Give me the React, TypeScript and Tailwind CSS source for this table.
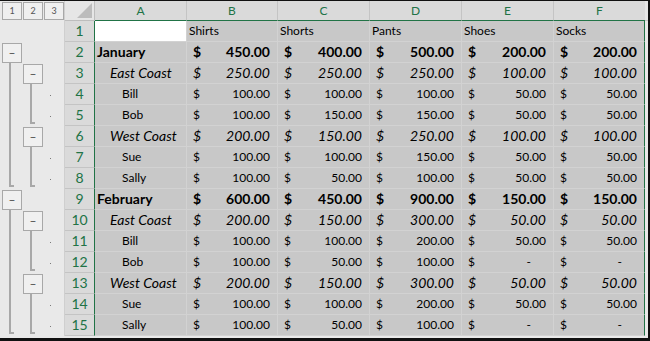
type Kind = "head" | "month" | "region" | "person";
type Mark = "" | "btn" | "line" | "end";

const cols = ["A", "B", "C", "D", "E", "F"];
const widths = ["w-[92px]", "w-[91px]", "w-[92px]", "w-[92px]", "w-[92px]", "w-[91px]"];

const rows: { label: string; kind: Kind; vals: (number | null)[]; l1: Mark; l2: Mark; dot: boolean }[] = [
  { label: "", kind: "head", vals: [], l1: "", l2: "", dot: false },
  { label: "January", kind: "month", vals: [450, 400, 500, 200, 200], l1: "btn", l2: "", dot: false },
  { label: "East Coast", kind: "region", vals: [250, 250, 250, 100, 100], l1: "line", l2: "btn", dot: false },
  { label: "Bill", kind: "person", vals: [100, 100, 100, 50, 50], l1: "line", l2: "line", dot: true },
  { label: "Bob", kind: "person", vals: [100, 150, 150, 50, 50], l1: "line", l2: "end", dot: true },
  { label: "West Coast", kind: "region", vals: [200, 150, 250, 100, 100], l1: "line", l2: "btn", dot: false },
  { label: "Sue", kind: "person", vals: [100, 100, 150, 50, 50], l1: "line", l2: "line", dot: true },
  { label: "Sally", kind: "person", vals: [100, 50, 100, 50, 50], l1: "end", l2: "end", dot: true },
  { label: "February", kind: "month", vals: [600, 450, 900, 150, 150], l1: "btn", l2: "", dot: false },
  { label: "East Coast", kind: "region", vals: [200, 150, 300, 50, 50], l1: "line", l2: "btn", dot: false },
  { label: "Bill", kind: "person", vals: [100, 100, 200, 50, 50], l1: "line", l2: "line", dot: true },
  { label: "Bob", kind: "person", vals: [100, 50, 100, null, null], l1: "line", l2: "end", dot: true },
  { label: "West Coast", kind: "region", vals: [200, 150, 300, 50, 50], l1: "line", l2: "btn", dot: false },
  { label: "Sue", kind: "person", vals: [100, 100, 200, 50, 50], l1: "line", l2: "line", dot: true },
  { label: "Sally", kind: "person", vals: [100, 50, 100, null, null], l1: "end", l2: "end", dot: true },
];

const headers = ["Shirts", "Shorts", "Pants", "Shoes", "Socks"];

function Lane({ mark, first }: { mark: Mark; first: boolean }) {
  return (
    <div className={`${first ? "w-[22px]" : "w-[21px]"} h-full flex`}>
      {mark === "btn" && (
        <div
          className={`${first ? "ml-[2px]" : "ml-[1px]"} mt-[1px] w-[20px] h-[20px] border border-[#a8a8a8] bg-[#f0f0f0] flex items-center justify-center text-[12px] leading-none text-[#444]`}
        >
          –
        </div>
      )}
      {mark === "line" && <div className={`${first ? "ml-[9px]" : "ml-[8px]"} w-[2px] h-full bg-[#a8a8a8]`} />}
      {mark === "end" && (
        <div className={`${first ? "ml-[9px]" : "ml-[8px]"} w-[5px] h-[19px] border-l-2 border-b-2 border-[#a8a8a8]`} />
      )}
    </div>
  );
}

function Money({ v, kind }: { v: number | null; kind: Kind }) {
  const style =
    kind === "month" ? "text-[14px] font-bold" : kind === "region" ? "text-[14px] italic" : "text-[12px]";
  return (
    <div className={`flex justify-between pl-[6px] ${v === null ? "pr-[22px]" : "pr-[7px]"} ${style}`}>
      <span>$</span>
      <span>{v === null ? "-" : v.toFixed(2)}</span>
    </div>
  );
}

export default function App() {
  return (
    <div className="w-[650px] h-[341px] overflow-hidden bg-[#e9e9e9] border-t border-r-2 border-b-[3px] border-[#111] flex flex-col [font-family:Lato,'Open_Sans',sans-serif] text-black">
      {/* column header row */}
      <div className="flex h-[20px] shrink-0">
        <div className="w-[65px] border-r border-[#cfcfcf] flex gap-[1px] pl-[2px] pt-[1px]">
          {["1", "2", "3"].map((n) => (
            <div
              key={n}
              className="w-[20px] h-[18px] border border-[#a8a8a8] bg-[#efefef] flex items-center justify-center text-[9px] text-[#555]"
            >
              {n}
            </div>
          ))}
        </div>
        <div className="w-[30px] border-r border-b border-[#bdbdbd] bg-[#e6e6e6] flex items-end justify-end pr-[2px] pb-[2px]">
          <div className="w-0 h-0 border-l-[15px] border-l-transparent border-b-[15px] border-b-[#bcbcbc]" />
        </div>
        {cols.map((c, i) => (
          <div
            key={c}
            className={`${widths[i]} ${i < 5 ? "border-r border-[#c4c4c4]" : ""} border-b border-b-[#217346] bg-[#dadada] text-center text-[12px] leading-[19px] text-[#217346]`}
          >
            {c}
          </div>
        ))}
        <div className="flex-1 border-b border-[#c4c4c4] bg-[#e6e6e6]" />
      </div>

      {rows.map((r, ri) => (
        <div key={ri} className="flex h-[21px] shrink-0">
          <div className="w-[65px] border-r border-[#cfcfcf] flex h-full">
            <Lane mark={r.l1} first />
            <Lane mark={r.l2} first={false} />
            <div className="w-[21px] h-full flex items-center">
              {r.dot && <div className="ml-[7px] mt-[2px] w-px h-px bg-[#7a7a7a]" />}
            </div>
          </div>
          <div className="w-[30px] border-r border-r-[#217346] border-b border-b-[#c4c4c4] bg-[#dadada] text-center text-[14px] leading-[20px] text-[#217346]">
            {ri + 1}
          </div>
          <div className={`w-[92px] border-r border-b border-[#d2d2d2] leading-[20px] ${ri === 0 ? "bg-white" : "bg-[#c8c8c8]"}`}>
            {r.kind === "month" && <div className="pl-[2px] text-[14px] font-bold">{r.label}</div>}
            {r.kind === "region" && <div className="pl-[15px] text-[14px] italic">{r.label}</div>}
            {r.kind === "person" && <div className="pl-[27px] text-[12px]">{r.label}</div>}
          </div>
          {[0, 1, 2, 3, 4].map((i) => (
            <div
              key={i}
              className={`${widths[i + 1]} border-b ${i === 4 ? "border-r border-r-[#217346] border-b-[#d2d2d2]" : "border-r border-[#d2d2d2]"} bg-[#c8c8c8] leading-[20px]`}
            >
              {r.kind === "head" ? (
                <div className="pl-[2px] text-[12px]">{headers[i]}</div>
              ) : (
                <Money v={r.vals[i]} kind={r.kind} />
              )}
            </div>
          ))}
          <div className="flex-1" />
        </div>
      ))}
    </div>
  );
}
